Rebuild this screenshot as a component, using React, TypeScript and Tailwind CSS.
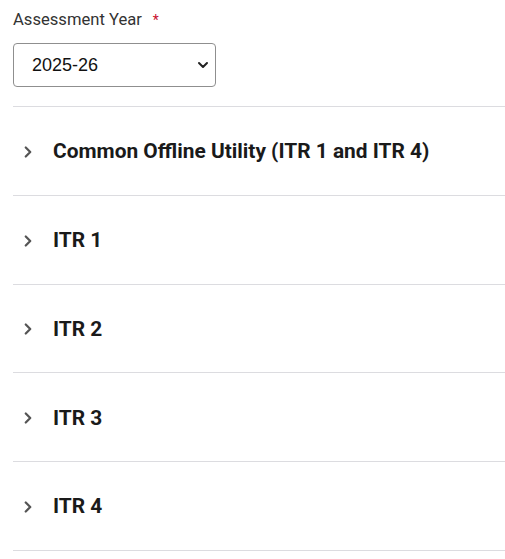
import { ChevronRight, ChevronDown } from "lucide-react";

const items = ["Common Offline Utility (ITR 1 and ITR 4)", "ITR 1", "ITR 2", "ITR 3", "ITR 4"];

export default function App() {
  return (
    <div className="min-h-screen bg-white pl-[13px] pt-[10px] font-['Roboto',sans-serif]">
      <label className="flex items-center text-[16.6px] leading-[20px] text-[#333]">
        Assessment Year
        <span className="ml-[11px] text-[14px] text-[#c8102e]">*</span>
      </label>
      <div className="mt-[13px] flex h-[44px] w-[203px] items-center justify-between rounded-[4px] border border-[#8f8f8f] pl-[18px] pr-[4px]">
        <span className="font-['Liberation_Sans',sans-serif] text-[18px] text-[#111]">2025-26</span>
        <ChevronDown size={16} strokeWidth={3} className="text-[#222]" />
      </div>
      <div className="mt-[19px] border-t border-[#dcdce0]">
        {items.map((t) => (
          <div key={t} className="flex h-[88.8px] items-center border-b border-[#dcdce0] pt-[2px]">
            <ChevronRight size={18} strokeWidth={3} className="ml-[6px] text-[#555]" />
            <span className="ml-[16px] text-[20.9px] font-bold text-[#1a1a1a]">{t}</span>
          </div>
        ))}
      </div>
    </div>
  );
}
